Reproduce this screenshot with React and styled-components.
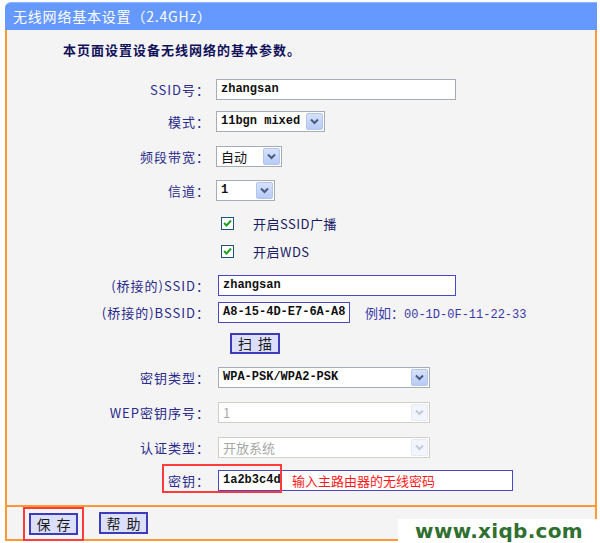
import React from 'react';
import styled, { createGlobalStyle } from 'styled-components';

const GlobalStyle = createGlobalStyle`
    body {
        margin: 0;
        background: #fff;
        font-family: "Noto Sans CJK SC", "DejaVu Sans", sans-serif;
    }
`;

const Page = styled.div`
    position: relative;
    width: 600px;
    height: 543px;
    padding: 2px 3px 0 5px;
    box-sizing: border-box;
    overflow: hidden;
`;

const Header = styled.div`
    height: 28px;
    background: #6699ff;
    border-top: 1px solid #8fb3ff;
    box-sizing: border-box;
    border-radius: 6px 0 0 0;
    color: #fff;
    font-size: 14px;
    line-height: 27px;
    padding-left: 8px;
    letter-spacing: 0.8px;
`;

const Body = styled.div`
    background: #f4f4f4;
    border-left: 2px solid #ff9933;
    border-right: 2px solid #ff9933;
    padding: 8px 0 13px;
`;

const Intro = styled.div`
    height: 24px;
    line-height: 24px;
    padding-left: 56px;
    font-size: 13px;
    font-weight: bold;
    letter-spacing: 1px;
    color: #11115a;
`;

const Row = styled.div`
    position: relative;
    display: grid;
    grid-template-columns: 203px 1fr;
    column-gap: 6px;
    align-items: center;
    height: 24px;
    margin-top: ${(p) => p.$mt}px;
`;

const Label = styled.div`
    text-align: right;
    font-size: 13px;
    letter-spacing: 1px;
    color: #2a2a8c;
    white-space: nowrap;
`;

const Field = styled.div`
    display: flex;
    align-items: center;
    padding-left: ${(p) => p.$indent || 0}px;
`;

const TextBox = styled.div`
    width: ${(p) => p.$w}px;
    height: 21px;
    box-sizing: border-box;
    background: #fff;
    border: 1px solid ${(p) => (p.$blue ? '#4848c8' : '#a5acb5')};
    font-family: "Liberation Mono", monospace;
    font-size: 12px;
    font-weight: bold;
    color: #111;
    line-height: 19px;
    padding-left: 4px;
`;

const Select = styled.div`
    width: ${(p) => p.$w}px;
    height: 21px;
    box-sizing: border-box;
    display: flex;
    align-items: center;
    background: #fff;
    border: 1px solid ${(p) => (p.$disabled ? '#d2d0c4' : '#a5acb5')};
    padding-right: 1px;
`;

const SelectValue = styled.div`
    flex: 1;
    padding-left: 4px;
    font-family: ${(p) => (p.$mono ? '"Liberation Mono", monospace' : '"Noto Sans CJK SC", sans-serif')};
    font-size: ${(p) => (p.$mono ? 12 : 13)}px;
    font-weight: ${(p) => (p.$mono ? 'bold' : 'normal')};
    color: ${(p) => (p.$disabled ? '#a8a8a8' : '#111')};
    white-space: nowrap;
    overflow: hidden;
`;

const ArrowButton = styled.div`
    width: 17px;
    height: 17px;
    box-sizing: border-box;
    display: flex;
    align-items: center;
    justify-content: center;
    border: 1px solid ${(p) => (p.$disabled ? '#e4ebf8' : '#b3c5ea')};
    border-radius: 2px;
    background: ${(p) => (p.$disabled ? '#f2f5fc' : 'linear-gradient(#d6e2fc, #b7cbf5)')};
`;

const Chevron = ({ disabled }) => (
    <svg width="9" height="7" viewBox="0 0 9 7">
        <path d="M1 1.5 L4.5 5 L8 1.5" fill="none" stroke={disabled ? '#c3cbda' : '#4b5b80'} strokeWidth="2" />
    </svg>
);

const Dropdown = ({ w, value, mono, disabled }) => (
    <Select $w={w} $disabled={disabled}>
        <SelectValue $mono={mono} $disabled={disabled}>{value}</SelectValue>
        <ArrowButton $disabled={disabled}>
            <Chevron disabled={disabled} />
        </ArrowButton>
    </Select>
);

const CheckBox = styled.div`
    width: 13px;
    height: 13px;
    box-sizing: border-box;
    border: 1px solid #1c5180;
    background: #fff;
    display: flex;
    align-items: center;
    justify-content: center;
    margin-right: 19px;
`;

const CheckText = styled.span`
    font-size: 13px;
    letter-spacing: 0.5px;
    color: #1a1a66;
`;

const Tick = () => (
    <svg width="9" height="8" viewBox="0 0 9 8">
        <path d="M1 4 L3.5 6.5 L8 1.5" fill="none" stroke="#22a022" strokeWidth="2" />
    </svg>
);

const Hint = styled.span`
    margin-left: 15px;
    font-family: "Liberation Mono", "Noto Sans CJK SC", monospace;
    font-size: 12px;
    color: #3a3aa8;
    white-space: nowrap;
`;

const HintCjk = styled.span`
    font-family: "Noto Sans CJK SC", sans-serif;
    font-size: 13px;
`;

const Button = styled.div`
    width: ${(p) => p.$w}px;
    height: ${(p) => p.$h}px;
    box-sizing: border-box;
    border: 2px solid #3c3cb8;
    background: #dcdffc;
    display: flex;
    align-items: center;
    justify-content: center;
    font-size: 14px;
    color: #1a1a1a;
    white-space: nowrap;
    gap: 6px;
`;

const KeyBox = styled.div`
    width: 295px;
    height: 21px;
    box-sizing: border-box;
    border: 1px solid #4848c8;
    background: #fff;
    display: flex;
    align-items: center;
    margin-left: 2px;
`;

const KeyValue = styled.span`
    width: 63px;
    padding-left: 4px;
    box-sizing: border-box;
    font-family: "Liberation Mono", monospace;
    font-size: 12px;
    font-weight: bold;
    color: #111;
`;

const KeyHint = styled.span`
    margin-left: 10px;
    font-size: 13px;
    color: #ff1a1a;
    white-space: nowrap;
`;

const RedFrame = styled.div`
    position: absolute;
    left: 155px;
    top: -4px;
    width: 120px;
    height: 29px;
    box-sizing: border-box;
    border: 2px solid #ff3b3b;
    pointer-events: none;
`;

const Footer = styled.div`
    height: 36px;
    box-sizing: border-box;
    border: 2px solid #ff9933;
    background: #f4f4f4;
    display: flex;
    align-items: center;
    padding-left: 16px;
    gap: 15px;
`;

const SaveFrame = styled.div`
    border: 2px solid #ff3b3b;
    padding: 4px;
    margin-top: 2px;
`;

const Watermark = styled.div`
    position: absolute;
    right: 0;
    bottom: 0;
    width: 202px;
    height: 24px;
    background: #fff;
    display: flex;
    align-items: center;
    justify-content: center;
    font-family: "DejaVu Sans", sans-serif;
    font-weight: bold;
    font-size: 20px;
    color: #2f7030;
    letter-spacing: 0.3px;
`;

const TwoChar = ({ text }) => (
    <>
        <span>{text[0]}</span>
        <span>{text[1]}</span>
    </>
);

const App = () => (
    <Page>
        <GlobalStyle />
        <Header>无线网络基本设置（2.4GHz）</Header>
        <Body>
            <Intro>本页面设置设备无线网络的基本参数。</Intro>
            <Row $mt={15}>
                <Label>SSID号：</Label>
                <Field><TextBox $w={240}>zhangsan</TextBox></Field>
            </Row>
            <Row $mt={8}>
                <Label>模式：</Label>
                <Field><Dropdown w={109} value="11bgn mixed" mono /></Field>
            </Row>
            <Row $mt={11}>
                <Label>频段带宽：</Label>
                <Field><Dropdown w={66} value="自动" /></Field>
            </Row>
            <Row $mt={10}>
                <Label>信道：</Label>
                <Field><Dropdown w={59} value="1" mono /></Field>
            </Row>
            <Row $mt={9}>
                <span />
                <Field $indent={5}>
                    <CheckBox><Tick /></CheckBox>
                    <CheckText>开启SSID广播</CheckText>
                </Field>
            </Row>
            <Row $mt={4}>
                <span />
                <Field $indent={5}>
                    <CheckBox><Tick /></CheckBox>
                    <CheckText>开启WDS</CheckText>
                </Field>
            </Row>
            <Row $mt={10}>
                <Label>(桥接的)SSID：</Label>
                <Field $indent={2}><TextBox $w={238} $blue>zhangsan</TextBox></Field>
            </Row>
            <Row $mt={3}>
                <Label>(桥接的)BSSID：</Label>
                <Field $indent={2}>
                    <TextBox $w={132} $blue>A8-15-4D-E7-6A-A8</TextBox>
                    <Hint><HintCjk>例如：</HintCjk>00-1D-0F-11-22-33</Hint>
                </Field>
            </Row>
            <Row $mt={7}>
                <span />
                <Field $indent={14}><Button $w={50} $h={21}><TwoChar text="扫描" /></Button></Field>
            </Row>
            <Row $mt={10}>
                <Label>密钥类型：</Label>
                <Field $indent={2}><Dropdown w={212} value="WPA-PSK/WPA2-PSK" mono /></Field>
            </Row>
            <Row $mt={11}>
                <Label>WEP密钥序号：</Label>
                <Field $indent={2}><Dropdown w={212} value="1" disabled /></Field>
            </Row>
            <Row $mt={11}>
                <Label>认证类型：</Label>
                <Field $indent={2}><Dropdown w={212} value="开放系统" disabled /></Field>
            </Row>
            <Row $mt={9}>
                <Label>密钥：</Label>
                <Field>
                    <KeyBox>
                        <KeyValue>1a2b3c4d</KeyValue>
                        <KeyHint>输入主路由器的无线密码</KeyHint>
                    </KeyBox>
                </Field>
                <RedFrame />
            </Row>
        </Body>
        <Footer>
            <SaveFrame><Button $w={49} $h={22}><TwoChar text="保存" /></Button></SaveFrame>
            <Button $w={49} $h={22}><TwoChar text="帮助" /></Button>
        </Footer>
        <Watermark>www.xiqb.com</Watermark>
    </Page>
);

export default App;
